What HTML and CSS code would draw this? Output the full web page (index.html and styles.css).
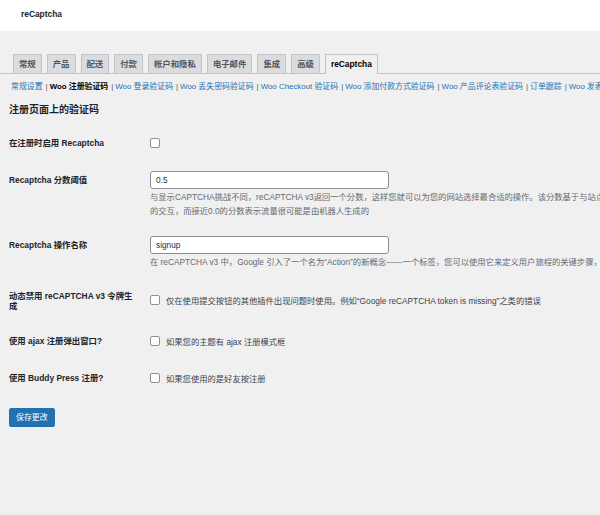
FILE: index.html
```html
<!DOCTYPE html>
<html lang="zh-CN">
<head>
<meta charset="utf-8">
<title>reCaptcha</title>
<link rel="stylesheet" href="styles.css">
</head>
<body>
<header class="topbar"><span class="topbar-title">reCaptcha</span></header>
<nav class="tabs">
  <a class="tab">常规</a>
  <a class="tab">产品</a>
  <a class="tab">配送</a>
  <a class="tab">付款</a>
  <a class="tab">帐户和隐私</a>
  <a class="tab">电子邮件</a>
  <a class="tab">集成</a>
  <a class="tab">高级</a>
  <a class="tab tab-active">reCaptcha</a>
</nav>
<ul class="subnav">
  <li><a class="sublink">常规设置</a><span class="sep">|</span></li>
  <li><a class="sublink sublink-current">Woo 注册验证码</a><span class="sep">|</span></li>
  <li><a class="sublink">Woo 登录验证码</a><span class="sep">|</span></li>
  <li><a class="sublink">Woo 丢失密码验证码</a><span class="sep">|</span></li>
  <li><a class="sublink">Woo Checkout 验证码</a><span class="sep">|</span></li>
  <li><a class="sublink">Woo 添加付款方式验证码</a><span class="sep">|</span></li>
  <li><a class="sublink">Woo 产品评论表验证码</a><span class="sep">|</span></li>
  <li><a class="sublink">订单跟踪</a><span class="sep">|</span></li>
  <li><a class="sublink">Woo 发表评论验证码</a></li>
</ul>
<h2 class="section-title">注册页面上的验证码</h2>
<form class="form">
  <div class="row row-check">
    <div class="label">在注册时启用 Recaptcha</div>
    <div class="field field-check"><span class="checkbox"></span></div>
  </div>
  <div class="row">
    <div class="label">Recaptcha 分数阈值</div>
    <div class="field">
      <div class="input">0.5</div>
      <p class="desc">与显示CAPTCHA挑战不同，reCAPTCHA v3返回一个分数，这样您就可以为您的网站选择最合适的操作。该分数基于与站点</p>
      <p class="desc">的交互，而接近0.0的分数表示流量很可能是由机器人生成的</p>
    </div>
  </div>
  <div class="row">
    <div class="label">Recaptcha 操作名称</div>
    <div class="field">
      <div class="input">signup</div>
      <p class="desc">在 reCAPTCHA v3 中，Google 引入了一个名为“Action”的新概念——一个标签，您可以使用它来定义用户旅程的关键步骤，</p>
    </div>
  </div>
  <div class="row row-tall">
    <div class="label label-wrap">动态禁用 reCAPTCHA v3 令牌生成</div>
    <div class="field field-check-mid"><span class="checkbox"></span><span class="check-text">仅在使用提交按钮的其他插件出现问题时使用。例如“Google reCAPTCHA token is missing”之类的错误</span></div>
  </div>
  <div class="row row-check">
    <div class="label">使用 ajax 注册弹出窗口?</div>
    <div class="field field-check"><span class="checkbox"></span><span class="check-text">如果您的主题有 ajax 注册模式框</span></div>
  </div>
  <div class="row row-check">
    <div class="label">使用 Buddy Press 注册?</div>
    <div class="field field-check"><span class="checkbox"></span><span class="check-text">如果您使用的是好友按注册</span></div>
  </div>
  <div class="actions"><button type="button" class="button-primary">保存更改</button></div>
</form>
</body>
</html>
```
FILE: styles.css
```css
html, body {
  margin: 0;
  padding: 0;
  overflow: hidden;
  background: #f0f0f1;
  width: 600px;
  height: 515px;
}
body {
  font-family: "Liberation Sans", "Noto Sans CJK SC", sans-serif;
  font-size: 7.9px;
  color: #3c434a;
}
.topbar {
  height: 31px;
  background: #fff;
  padding-left: 21px;
  box-sizing: border-box;
  display: flex;
  align-items: center;
  padding-bottom: 3px;
}
.topbar-title {
  font-size: 8.4px;
  color: #1d2327;
  font-weight: 600;
}
.tabs {
  display: flex;
  margin: 23px 0 0 0;
  padding-left: 8px;
  border-bottom: 1px solid #c3c4c7;
  height: 20px;
  box-sizing: border-box;
}
.tab {
  display: block;
  margin-left: 5px;
  padding: 0 5px;
  height: 19px;
  line-height: 18px;
  box-sizing: border-box;
  border: 1px solid #c3c4c7;
  border-bottom: none;
  background: #dcdcde;
  color: #50575e;
  font-size: 8.4px;
  font-weight: 600;
  white-space: nowrap;
}
.tab-active {
  background: #f0f0f1;
  color: #000;
  height: 20px;
  margin-bottom: -1px;
}
.subnav {
  list-style: none;
  margin: 7px 0 0 0;
  padding: 0 0 0 11px;
  display: flex;
  white-space: nowrap;
  line-height: 12px;
}
.subnav li {
  display: flex;
}
.sublink {
  color: #2271b1;
}
.sublink-current {
  color: #000;
  font-weight: 600;
}
.sep {
  color: #50575e;
  margin: 0 2px 0 3px;
}
.section-title {
  margin: 11px 0 0 9px;
  font-size: 10px;
  line-height: 12px;
  font-weight: 700;
  color: #1d2327;
}
.form {
  margin: 9px 0 0 0;
}
.row {
  display: grid;
  grid-template-columns: 141px 1fr;
  padding-left: 9px;
}
.row-check {
  height: 37px;
}
.row-tall {
  height: 45px;
}
.label {
  padding-top: 13px;
  line-height: 10px;
  font-size: 8.4px;
  font-weight: 600;
  color: #1d2327;
  white-space: nowrap;
}
.label-wrap {
  white-space: normal;
  width: 130px;
}
.field {
  padding: 9px 0 9px 0;
  min-width: 0;
}
.field-check {
  padding: 13px 0 0 0;
  display: flex;
  align-items: center;
  height: 10px;
}
.field-check-mid {
  padding: 17px 0 0 0;
  display: flex;
  align-items: center;
  height: 10px;
  white-space: nowrap;
}
.checkbox {
  display: block;
  flex: none;
  width: 10px;
  height: 10px;
  box-sizing: border-box;
  border: 1px solid #8c8f94;
  border-radius: 2px;
  background: #fff;
}
.check-text {
  margin-left: 6px;
  font-size: 8.3px;
  color: #3c434a;
  white-space: nowrap;
}
.input {
  width: 239px;
  height: 18px;
  box-sizing: border-box;
  border: 1px solid #8c8f94;
  border-radius: 3px;
  background: #fff;
  padding: 0 5px;
  line-height: 16px;
  font-size: 8.3px;
  color: #2c3338;
}
.desc {
  margin: 1px 0 0 0;
  line-height: 14px;
  font-size: 8.3px;
  color: #646970;
  white-space: nowrap;
}
.desc + .desc {
  margin-top: 0;
}
.actions {
  padding: 11px 0 0 9px;
}
.button-primary {
  display: block;
  height: 19px;
  padding: 0 6px;
  border: 1px solid #2271b1;
  border-radius: 2px;
  background: #2271b1;
  color: #fff;
  font-family: "Liberation Sans", "Noto Sans CJK SC", sans-serif;
  font-size: 7.9px;
  line-height: 17px;
}
```
